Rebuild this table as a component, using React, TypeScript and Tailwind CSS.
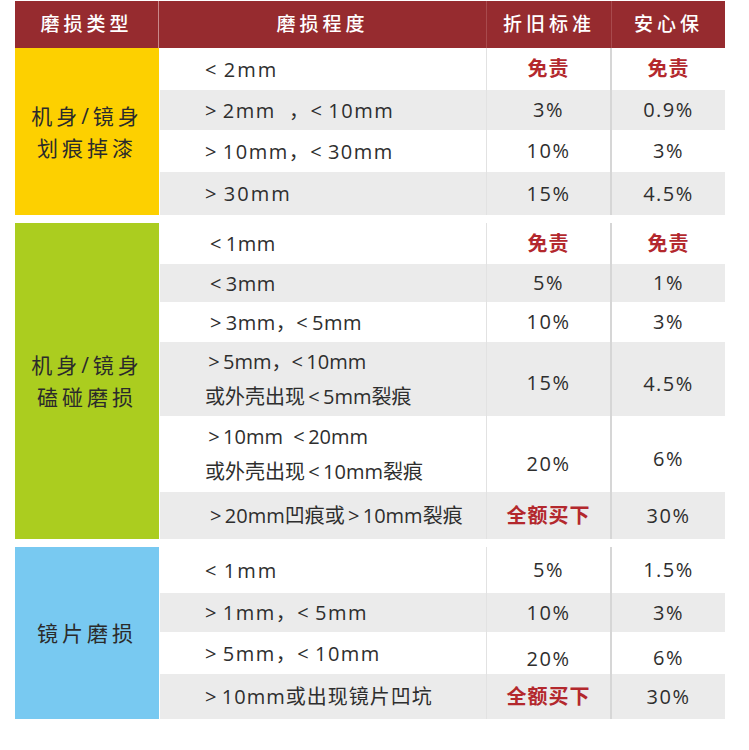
import React from "react";

type Row = {
  lines: string[];
  a: string;
  b: string;
  h: string; // row height class
  gray: boolean;
  track: string;
  low?: string; // extra top padding for values
};

type Section = {
  label: string[];
  bg: string;
  rows: Row[];
};

const RED = new Set(["免责", "全额买下"]);
const t = "\u2009";

const sections: Section[] = [
  {
    label: ["机身/镜身", "划痕掉漆"],
    bg: "bg-[#fdd000]",
    rows: [
      { lines: [`<${t}2mm`], a: "免责", b: "免责", h: "h-[42px]", gray: false, track: "tracking-[2px]" },
      { lines: [`>${t}2mm  ，<${t}10mm`], a: "3%", b: "0.9%", h: "h-[40px]", gray: true, track: "tracking-[1.5px]" },
      { lines: [`>${t}10mm，<${t}30mm`], a: "10%", b: "3%", h: "h-[42px]", gray: false, track: "tracking-[1.5px]" },
      { lines: [`>${t}30mm`], a: "15%", b: "4.5%", h: "h-[43px]", gray: true, track: "tracking-[2px]" },
    ],
  },
  {
    label: ["机身/镜身", "磕碰磨损"],
    bg: "bg-[#abcd1f]",
    rows: [
      { lines: [`<${t}1mm`], a: "免责", b: "免责", h: "h-[41px]", gray: false, track: "tracking-[0.5px] pl-[5px]" },
      { lines: [`<${t}3mm`], a: "5%", b: "1%", h: "h-[38px]", gray: true, track: "tracking-[0.5px] pl-[5px]" },
      { lines: [`>${t}3mm，<${t}5mm`], a: "10%", b: "3%", h: "h-[40px]", gray: false, track: "tracking-[0.5px] pl-[5px]" },
      {
        lines: [`${t}>${t}5mm，<${t}10mm`, `或外壳出现${t}<${t}5mm裂痕`],
        a: "15%",
        b: "4.5%",
        h: "h-[74px]",
        gray: true,
        track: "tracking-[0px]",
        low: "pt-[8px]",
      },
      {
        lines: [`${t}>${t}10mm  <${t}20mm`, `或外壳出现${t}<${t}10mm裂痕`],
        a: "20%",
        b: "6%",
        h: "h-[76px]",
        gray: false,
        track: "tracking-[0px]",
        low: "pt-[20px]",
      },
      {
        lines: [`>${t}20mm凹痕或${t}>${t}10mm裂痕`],
        a: "全额买下",
        b: "30%",
        h: "h-[47px]",
        gray: true,
        track: "tracking-[0px] pl-[5px]",
      },
    ],
  },
  {
    label: ["镜片磨损"],
    bg: "bg-[#78c9f1]",
    rows: [
      { lines: [`<${t}1mm`], a: "5%", b: "1.5%", h: "h-[46px]", gray: false, track: "tracking-[2px]" },
      { lines: [`>${t}1mm，<${t}5mm`], a: "10%", b: "3%", h: "h-[39px]", gray: true, track: "tracking-[1.5px]" },
      {
        lines: [`>${t}5mm，<${t}10mm`],
        a: "20%",
        b: "6%",
        h: "h-[42px]",
        gray: false,
        track: "tracking-[1.5px]",
        low: "pt-[12px]",
      },
      { lines: [`>${t}10mm或出现镜片凹坑`], a: "全额买下", b: "30%", h: "h-[45px]", gray: true, track: "tracking-[1px]" },
    ],
  },
];

function Value({ v, pad }: { v: string; pad?: string }) {
  const red = RED.has(v);
  return (
    <span
      className={`${pad ?? ""} ${
        red ? "text-[#b3282d] font-bold tracking-[1px]" : "text-[#2e2e2e] tracking-[1.5px]"
      }`}
    >
      {v}
    </span>
  );
}

export default function App() {
  return (
    <div
      className="w-[749px] h-[750px] bg-white pt-px"
      style={{ fontFamily: '"Open Sans", "Noto Sans CJK SC", sans-serif' }}
    >
      <div className="ml-[15px] w-[710px]">
        {/* header */}
        <div className="flex h-[47px] bg-[#962b2f] text-white text-[19px] font-medium tracking-[4px]">
          <div className="w-[144px] flex items-center justify-center border-r border-[#c9898b]">
            磨损类型
          </div>
          <div className="w-[328px] flex items-center justify-center border-r border-[#a84a4d]">
            磨损程度
          </div>
          <div className="w-[125px] flex items-center justify-center border-r border-[#a84a4d]">
            折旧标准
          </div>
          <div className="flex-1 flex items-center justify-center">安心保</div>
        </div>

        {sections.map((s, si) => (
          <div key={si} className={`flex ${si > 0 ? "mt-[8px]" : ""}`}>
            <div
              className={`w-[144px] ${s.bg} flex flex-col items-center justify-center text-[21px] leading-[32px] text-[#2b2b2b] tracking-[4px]`}
            >
              {s.label.map((l, i) => (
                <div key={i}>{l}</div>
              ))}
            </div>
            <div className="w-px bg-white" />
            <div className="flex-1">
              {s.rows.map((r, ri) => (
                <div
                  key={ri}
                  className={`flex ${r.h} ${r.gray ? "bg-[#ebebeb]" : "bg-white"} text-[20px]`}
                >
                  <div
                    className={`w-[327px] flex flex-col justify-center text-[#2e2e2e] whitespace-pre leading-[35px] pl-[45px] border-r border-[#e2e2e2]`}
                  >
                    {r.lines.map((l, i) => (
                      <div key={i} className={r.track}>
                        {l}
                      </div>
                    ))}
                  </div>
                  <div className="w-[125px] flex items-center justify-center border-r-2 border-[#d6d6d6]">
                    <Value v={r.a} pad={r.low} />
                  </div>
                  <div className="flex-1 flex items-center justify-center">
                    <Value v={r.b} pad={r.low ? "pt-[10px]" : ""} />
                  </div>
                </div>
              ))}
            </div>
          </div>
        ))}
      </div>
    </div>
  );
}
